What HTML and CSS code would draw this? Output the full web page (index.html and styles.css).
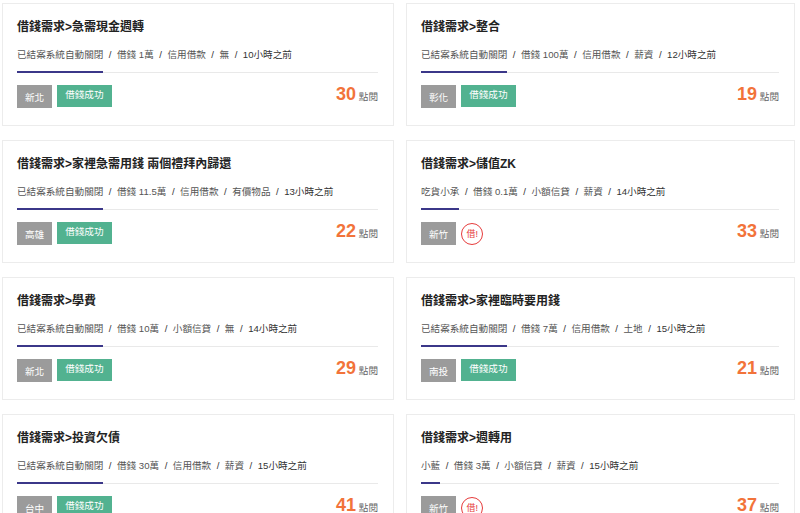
FILE: index.html
```html
<!DOCTYPE html>
<html lang="zh-TW">
<head>
    <meta charset="UTF-8">
    <meta name="viewport" content="width=device-width, initial-scale=1.0">
    <title>借錢需求列表</title>
    <link rel="stylesheet" href="styles.css">
</head>
<body>
    <div class="list">
        <div class="card">
            <div class="title">借錢需求&gt;急需現金週轉</div>
            <div class="meta">
                <span class="name">已結案系統自動關閉</span><span class="sep">/</span><span>借錢 1萬</span><span class="sep">/</span><span>信用借款</span><span class="sep">/</span><span>無</span><span class="sep">/</span><span class="time">10小時之前</span>
            </div>
            <div class="foot">
                <div class="tags"><span class="tag area">新北</span><span class="tag done">借錢成功</span></div>
                <div class="views"><b>30</b> 點閱</div>
            </div>
        </div>

        <div class="card">
            <div class="title">借錢需求&gt;整合</div>
            <div class="meta">
                <span class="name">已結案系統自動關閉</span><span class="sep">/</span><span>借錢 100萬</span><span class="sep">/</span><span>信用借款</span><span class="sep">/</span><span>薪資</span><span class="sep">/</span><span class="time">12小時之前</span>
            </div>
            <div class="foot">
                <div class="tags"><span class="tag area">彰化</span><span class="tag done">借錢成功</span></div>
                <div class="views"><b>19</b> 點閱</div>
            </div>
        </div>

        <div class="card">
            <div class="title">借錢需求&gt;家裡急需用錢 兩個禮拜內歸還</div>
            <div class="meta">
                <span class="name">已結案系統自動關閉</span><span class="sep">/</span><span>借錢 11.5萬</span><span class="sep">/</span><span>信用借款</span><span class="sep">/</span><span>有價物品</span><span class="sep">/</span><span class="time">13小時之前</span>
            </div>
            <div class="foot">
                <div class="tags"><span class="tag area">高雄</span><span class="tag done">借錢成功</span></div>
                <div class="views"><b>22</b> 點閱</div>
            </div>
        </div>

        <div class="card">
            <div class="title">借錢需求&gt;儲值ZK</div>
            <div class="meta">
                <span class="name">吃貨小承</span><span class="sep">/</span><span>借錢 0.1萬</span><span class="sep">/</span><span>小額信貸</span><span class="sep">/</span><span>薪資</span><span class="sep">/</span><span class="time">14小時之前</span>
            </div>
            <div class="foot">
                <div class="tags"><span class="tag area">新竹</span><span class="lend">借!</span></div>
                <div class="views"><b>33</b> 點閱</div>
            </div>
        </div>

        <div class="card">
            <div class="title">借錢需求&gt;學費</div>
            <div class="meta">
                <span class="name">已結案系統自動關閉</span><span class="sep">/</span><span>借錢 10萬</span><span class="sep">/</span><span>小額信貸</span><span class="sep">/</span><span>無</span><span class="sep">/</span><span class="time">14小時之前</span>
            </div>
            <div class="foot">
                <div class="tags"><span class="tag area">新北</span><span class="tag done">借錢成功</span></div>
                <div class="views"><b>29</b> 點閱</div>
            </div>
        </div>

        <div class="card">
            <div class="title">借錢需求&gt;家裡臨時要用錢</div>
            <div class="meta">
                <span class="name">已結案系統自動關閉</span><span class="sep">/</span><span>借錢 7萬</span><span class="sep">/</span><span>信用借款</span><span class="sep">/</span><span>土地</span><span class="sep">/</span><span class="time">15小時之前</span>
            </div>
            <div class="foot">
                <div class="tags"><span class="tag area">南投</span><span class="tag done">借錢成功</span></div>
                <div class="views"><b>21</b> 點閱</div>
            </div>
        </div>

        <div class="card">
            <div class="title">借錢需求&gt;投資欠債</div>
            <div class="meta">
                <span class="name">已結案系統自動關閉</span><span class="sep">/</span><span>借錢 30萬</span><span class="sep">/</span><span>信用借款</span><span class="sep">/</span><span>薪資</span><span class="sep">/</span><span class="time">15小時之前</span>
            </div>
            <div class="foot">
                <div class="tags"><span class="tag area">台中</span><span class="tag done">借錢成功</span></div>
                <div class="views"><b>41</b> 點閱</div>
            </div>
        </div>

        <div class="card">
            <div class="title">借錢需求&gt;週轉用</div>
            <div class="meta">
                <span class="name">小藍</span><span class="sep">/</span><span>借錢 3萬</span><span class="sep">/</span><span>小額信貸</span><span class="sep">/</span><span>薪資</span><span class="sep">/</span><span class="time">15小時之前</span>
            </div>
            <div class="foot">
                <div class="tags"><span class="tag area">新竹</span><span class="lend">借!</span></div>
                <div class="views"><b>37</b> 點閱</div>
            </div>
        </div>
    </div>
</body>
</html>
```

FILE: styles.css
```css
body {
    margin: 0;
    background: #fff;
    font-family: "Liberation Sans", "Noto Sans CJK TC", sans-serif;
    color: #444;
}
.list {
    display: grid;
    grid-template-columns: 392px 389px;
    column-gap: 12px;
    row-gap: 14px;
    padding: 3px 0 0 2px;
}
.card {
    border: 1px solid #ececec;
    padding: 15px 15px 17px 14px;
    background: #fff;
}
.title {
    font-size: 12px;
    line-height: 16px;
    font-weight: bold;
    color: #222;
}
.meta {
    display: flex;
    margin-top: 13px;
    font-size: 9.6px;
    line-height: 14px;
    color: #555;
    border-bottom: 1px solid #e9e9e9;
    white-space: nowrap;
}
.meta span {
    padding-bottom: 9px;
}
.meta .name {
    border-bottom: 2px solid #3b3789;
    margin-bottom: -1px;
}
.meta .sep {
    padding-left: 5.5px;
    padding-right: 5.5px;
    color: #333;
}
.meta .time {
    color: #333;
}
.foot {
    display: flex;
    justify-content: space-between;
    align-items: center;
    margin-top: 12px;
}
.tags {
    display: flex;
    align-items: center;
}
.tag {
    display: inline-block;
    font-size: 9.6px;
    color: #fff;
    padding: 0 8px;
}
.tag.area {
    background: #9b9b9b;
    line-height: 14px;
    padding-top: 6px;
    padding-bottom: 3px;
}
.tag.done {
    background: #52b290;
    margin-left: 5px;
    line-height: 14px;
    padding-top: 3px;
    padding-bottom: 5px;
    align-self: flex-start;
}
.lend {
    display: inline-flex;
    align-items: center;
    justify-content: center;
    width: 20px;
    height: 20px;
    margin-left: 5px;
    border: 1.5px solid #e63b3b;
    border-radius: 50%;
    color: #e63b3b;
    font-size: 9px;
}
.views {
    font-size: 9.6px;
    color: #666;
    margin-top: -4px;
}
.views b {
    font-size: 18px;
    color: #f2733a;
}
```
